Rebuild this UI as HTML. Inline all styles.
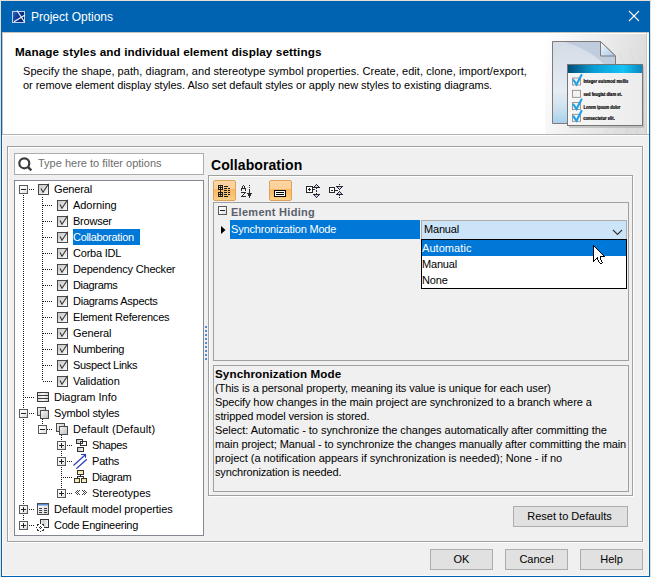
<!DOCTYPE html>
<html><head><meta charset="utf-8">
<style>
*{margin:0;padding:0;box-sizing:border-box}
html,body{width:651px;height:577px;overflow:hidden;background:#e6dfd8;font-family:"Liberation Sans",sans-serif;font-size:11px;color:#000}
.a{position:absolute}
.t{position:absolute;white-space:nowrap;line-height:14px}
.tr{letter-spacing:-0.18px}
.dv{position:absolute;width:1px;background:repeating-linear-gradient(to bottom,#1a1a1a 0 1px,transparent 1px 2px)}
.dh{position:absolute;height:1px;background:repeating-linear-gradient(to right,#1a1a1a 0 1px,transparent 1px 2px)}
.exp{position:absolute;width:9px;height:9px;border:1px solid #5a5a5a;background:linear-gradient(135deg,#fff 0%,#f4f4f4 50%,#dcdcdc 100%)}
.exp:before{content:"";position:absolute;left:1px;top:3px;width:5px;height:1px;background:#222}
.exp.p:after{content:"";position:absolute;left:3px;top:1px;width:1px;height:5px;background:#222}
.btn{position:absolute;border:1px solid #adadad;background:#e1e1e1;text-align:center;line-height:18px}
</style></head><body>

<div class="a" style="left:1px;top:1px;width:649px;height:576px;background:#0063b1"></div>
<div class="a" style="left:2px;top:32px;width:647px;height:544px;background:#fcf8f3"></div>
<div class="a" style="left:3px;top:32px;width:645px;height:543px;background:#f0f0f0"></div>
<div class="a" style="left:2px;top:32px;width:647px;height:102px;background:#fff;border-top:1px solid #c9c3bd;border-left:1px solid #c9c3bd"></div>
<div class="a" style="left:2px;top:134px;width:647px;height:1px;background:#b4b4b4"></div>
<div class="a" style="left:2px;top:135px;width:647px;height:1px;background:#fdfdfd"></div>
<div class="t" style="left:31px;top:9px;font-size:12px;color:#fff;line-height:16px">Project Options</div>
<svg class="a" style="left:11px;top:10px" width="15" height="14" viewBox="0 0 15 14">
<defs><linearGradient id="tig" x1="0" y1="0" x2="1" y2="0.4"><stop offset="0" stop-color="#2f6ad0"/><stop offset="0.5" stop-color="#0d3a9a"/><stop offset="1" stop-color="#06206e"/></linearGradient></defs>
<rect x="1.5" y="1.5" width="12" height="11" fill="url(#tig)" stroke="#c4d0e6" stroke-width="1"/>
<path d="M6 0.5 L13.8 12.5 M3 11.8 L14 5" stroke="#f0f4fb" stroke-width="1.2" fill="none"/>
</svg>
<svg class="a" style="left:628px;top:10px" width="12" height="12" viewBox="0 0 12 12">
<path d="M1 1 L11 11 M11 1 L1 11" stroke="#fff" stroke-width="1.1"/></svg>
<div class="t" style="left:15px;top:45px;font-weight:bold;letter-spacing:0.1px;transform:scaleX(1.063);transform-origin:0 0">Manage styles and individual element display settings</div>
<div class="t" style="left:23px;top:64px;letter-spacing:0.055px">Specify the shape, path, diagram, and stereotype symbol properties. Create, edit, clone, import/export,</div>
<div class="t" style="left:23px;top:78px;letter-spacing:-0.035px">or remove element display styles. Also set default styles or apply new styles to existing diagrams.</div>
<svg class="a" style="left:545px;top:33px" width="104" height="101" viewBox="0 0 104 101">
<defs>
<linearGradient id="hbg" x1="0" y1="0" x2="1" y2="0.25"><stop offset="0" stop-color="#ffffff"/><stop offset="0.45" stop-color="#f0f0f0"/><stop offset="1" stop-color="#dcdcdc"/></linearGradient>
<linearGradient id="doc" x1="0" y1="0" x2="0" y2="1"><stop offset="0" stop-color="#d3dbe6"/><stop offset="0.6" stop-color="#e6ecf3"/><stop offset="0.8" stop-color="#cfe2f0"/><stop offset="1" stop-color="#a6d0ec"/></linearGradient>
<linearGradient id="fold" x1="0" y1="0" x2="1" y2="1"><stop offset="0" stop-color="#f4f8fc"/><stop offset="1" stop-color="#a9c9ea"/></linearGradient>
<linearGradient id="tb" x1="0" y1="0" x2="1" y2="0"><stop offset="0" stop-color="#004e78"/><stop offset="0.35" stop-color="#0a9ed4"/><stop offset="0.75" stop-color="#16c2f4"/><stop offset="1" stop-color="#0a86bc"/></linearGradient>
<linearGradient id="pnl" x1="0" y1="0" x2="1" y2="0"><stop offset="0" stop-color="#f7f7f7"/><stop offset="1" stop-color="#ececec"/></linearGradient>
</defs>
<rect x="0" y="0" width="102" height="101" fill="url(#hbg)"/>
<g stroke="#cfd3d8" stroke-width="0.5" fill="none" opacity="0.8">
<path d="M60 101 Q80 70 102 55 M70 101 Q85 78 102 68 M80 101 Q90 85 102 80 M90 101 Q95 92 102 90"/>
<path d="M75 20 Q90 60 92 101 M85 15 Q98 55 100 101 M65 30 Q78 65 82 101"/>
</g>
<rect x="0" y="0" width="102" height="1" fill="#fff"/>
<rect x="101" y="0" width="1" height="101" fill="#cacaca"/>
<rect x="102" y="0" width="2" height="101" fill="#fff"/>
<path d="M7.5 8.5 H55.5 L70.5 23 V90.5 H7.5 Z" fill="url(#doc)" stroke="#807b78" stroke-width="1"/>
<path d="M20 9 Q55 20 70 45 V23 L55.5 9 Z" fill="#b8c7da" opacity="0.75"/>
<path d="M55.5 8.5 V23 H70.5 Z" fill="url(#fold)" stroke="#807b78" stroke-width="1"/>
<rect x="24" y="33" width="75" height="62" fill="#9a9a9a" opacity="0.45"/>
<rect x="22.5" y="31.5" width="75" height="61" fill="url(#pnl)" stroke="#767676" stroke-width="1"/>
<rect x="23" y="32" width="74" height="8" fill="url(#tb)"/>
<g fill="#f2f2f2" stroke="#8d7f7f" stroke-width="0.8">
<rect x="27.5" y="45" width="8" height="7"/><rect x="27.5" y="57.3" width="8" height="7"/><rect x="27.5" y="69.6" width="8" height="7"/><rect x="27.5" y="81.3" width="8" height="7"/></g>
<g stroke="#1aa2e8" stroke-width="2.1" fill="none" stroke-linecap="round">
<path d="M28.5 47 L31.5 51.5 L36.5 42"/><path d="M28.5 71.6 L31.5 76 L36.5 66.5"/><path d="M28.5 83.3 L31.5 87.8 L36.5 78"/></g>
<g fill="#000" stroke="#000" stroke-width="0.2" font-size="5" font-weight="bold" font-family="Liberation Sans">
<text x="38.4" y="50.3" textLength="45" lengthAdjust="spacingAndGlyphs">Integer euismod mollis</text>
<text x="38.4" y="63.2" textLength="38.7" lengthAdjust="spacingAndGlyphs">sed feugiat diam et.</text>
<text x="38.4" y="75.5" textLength="37" lengthAdjust="spacingAndGlyphs">Lorem ipsum dolor</text>
<text x="38.2" y="87.2" textLength="31.6" lengthAdjust="spacingAndGlyphs">consectetur elit.</text></g>
</svg>
<div class="a" style="left:7px;top:146px;width:636px;height:396px;border:1px solid #a0a0a0;border-right-color:#a0a0a0"></div>
<div class="a" style="left:8px;top:147px;width:634px;height:394px;border-left:1px solid #fff;border-top:1px solid #fff"></div>
<div class="a" style="left:7px;top:542px;width:637px;height:1px;background:#fff"></div>
<div class="a" style="left:643px;top:146px;width:1px;height:397px;background:#fff"></div>
<div class="a" style="left:14px;top:153px;width:190px;height:22px;border:1px solid #abadb3;background:#fff"></div>
<svg class="a" style="left:17px;top:156px" width="16" height="16" viewBox="0 0 16 16">
<circle cx="7.3" cy="7.3" r="5" fill="none" stroke="#3c3c3c" stroke-width="2.2"/>
<path d="M10.8 10.8 L14.3 14.3" stroke="#3c3c3c" stroke-width="2.4"/></svg>
<div class="t" style="left:38px;top:156px;color:#6d6d6d">Type here to filter options</div>
<div class="a" style="left:14px;top:180px;width:190px;height:356px;border:1px solid #828790;background:#fff"></div>
<div class="dv" style="left:23px;top:195px;height:326px"></div>
<div class="dv" style="left:42px;top:197px;height:184px"></div>
<div class="dv" style="left:42px;top:419px;height:6px"></div>
<div class="dv" style="left:61px;top:435px;height:55px"></div>
<div class="exp" style="left:19px;top:185px"></div>
<div class="dh" style="left:29px;top:189px;width:5px"></div>
<svg class="a" style="left:38px;top:183px" width="13" height="12" viewBox="0 0 13 12">
<defs><linearGradient id="cg189" x1="0" y1="0" x2="1" y2="1"><stop offset="0" stop-color="#c4c4c4"/><stop offset="1" stop-color="#fdfdfd"/></linearGradient></defs>
<rect x="0.5" y="1.5" width="10" height="10" fill="url(#cg189)" stroke="#474747" stroke-width="1"/>
<path d="M3 5.5 L5 9.2 L10.6 0.8" fill="none" stroke="#333" stroke-width="1.1"/></svg>
<div class="t" style="left:54px;top:182px;letter-spacing:-0.163px">General</div>
<div class="dh" style="left:43px;top:205px;width:9px"></div>
<svg class="a" style="left:57px;top:199px" width="13" height="12" viewBox="0 0 13 12">
<defs><linearGradient id="cg205" x1="0" y1="0" x2="1" y2="1"><stop offset="0" stop-color="#c4c4c4"/><stop offset="1" stop-color="#fdfdfd"/></linearGradient></defs>
<rect x="0.5" y="1.5" width="10" height="10" fill="url(#cg205)" stroke="#474747" stroke-width="1"/>
<path d="M3 5.5 L5 9.2 L10.6 0.8" fill="none" stroke="#333" stroke-width="1.1"/></svg>
<div class="t" style="left:73px;top:198px;letter-spacing:-0.051px">Adorning</div>
<div class="dh" style="left:43px;top:221px;width:9px"></div>
<svg class="a" style="left:57px;top:215px" width="13" height="12" viewBox="0 0 13 12">
<defs><linearGradient id="cg221" x1="0" y1="0" x2="1" y2="1"><stop offset="0" stop-color="#c4c4c4"/><stop offset="1" stop-color="#fdfdfd"/></linearGradient></defs>
<rect x="0.5" y="1.5" width="10" height="10" fill="url(#cg221)" stroke="#474747" stroke-width="1"/>
<path d="M3 5.5 L5 9.2 L10.6 0.8" fill="none" stroke="#333" stroke-width="1.1"/></svg>
<div class="t" style="left:73px;top:214px;letter-spacing:-0.23px">Browser</div>
<div class="dh" style="left:43px;top:237px;width:9px"></div>
<svg class="a" style="left:57px;top:231px" width="13" height="12" viewBox="0 0 13 12">
<defs><linearGradient id="cg237" x1="0" y1="0" x2="1" y2="1"><stop offset="0" stop-color="#c4c4c4"/><stop offset="1" stop-color="#fdfdfd"/></linearGradient></defs>
<rect x="0.5" y="1.5" width="10" height="10" fill="url(#cg237)" stroke="#474747" stroke-width="1"/>
<path d="M3 5.5 L5 9.2 L10.6 0.8" fill="none" stroke="#333" stroke-width="1.1"/></svg>
<div class="a" style="left:73px;top:229px;width:67px;height:16px;background:#0078d7"></div>
<div class="t" style="left:73px;top:230px;color:#fff;letter-spacing:-0.313px">Collaboration</div>
<div class="dh" style="left:43px;top:253px;width:9px"></div>
<svg class="a" style="left:57px;top:247px" width="13" height="12" viewBox="0 0 13 12">
<defs><linearGradient id="cg253" x1="0" y1="0" x2="1" y2="1"><stop offset="0" stop-color="#c4c4c4"/><stop offset="1" stop-color="#fdfdfd"/></linearGradient></defs>
<rect x="0.5" y="1.5" width="10" height="10" fill="url(#cg253)" stroke="#474747" stroke-width="1"/>
<path d="M3 5.5 L5 9.2 L10.6 0.8" fill="none" stroke="#333" stroke-width="1.1"/></svg>
<div class="t" style="left:73px;top:246px;letter-spacing:-0.211px">Corba IDL</div>
<div class="dh" style="left:43px;top:269px;width:9px"></div>
<svg class="a" style="left:57px;top:263px" width="13" height="12" viewBox="0 0 13 12">
<defs><linearGradient id="cg269" x1="0" y1="0" x2="1" y2="1"><stop offset="0" stop-color="#c4c4c4"/><stop offset="1" stop-color="#fdfdfd"/></linearGradient></defs>
<rect x="0.5" y="1.5" width="10" height="10" fill="url(#cg269)" stroke="#474747" stroke-width="1"/>
<path d="M3 5.5 L5 9.2 L10.6 0.8" fill="none" stroke="#333" stroke-width="1.1"/></svg>
<div class="t" style="left:73px;top:262px;letter-spacing:-0.192px">Dependency Checker</div>
<div class="dh" style="left:43px;top:285px;width:9px"></div>
<svg class="a" style="left:57px;top:279px" width="13" height="12" viewBox="0 0 13 12">
<defs><linearGradient id="cg285" x1="0" y1="0" x2="1" y2="1"><stop offset="0" stop-color="#c4c4c4"/><stop offset="1" stop-color="#fdfdfd"/></linearGradient></defs>
<rect x="0.5" y="1.5" width="10" height="10" fill="url(#cg285)" stroke="#474747" stroke-width="1"/>
<path d="M3 5.5 L5 9.2 L10.6 0.8" fill="none" stroke="#333" stroke-width="1.1"/></svg>
<div class="t" style="left:73px;top:278px;letter-spacing:-0.323px">Diagrams</div>
<div class="dh" style="left:43px;top:301px;width:9px"></div>
<svg class="a" style="left:57px;top:295px" width="13" height="12" viewBox="0 0 13 12">
<defs><linearGradient id="cg301" x1="0" y1="0" x2="1" y2="1"><stop offset="0" stop-color="#c4c4c4"/><stop offset="1" stop-color="#fdfdfd"/></linearGradient></defs>
<rect x="0.5" y="1.5" width="10" height="10" fill="url(#cg301)" stroke="#474747" stroke-width="1"/>
<path d="M3 5.5 L5 9.2 L10.6 0.8" fill="none" stroke="#333" stroke-width="1.1"/></svg>
<div class="t" style="left:73px;top:294px;letter-spacing:-0.253px">Diagrams Aspects</div>
<div class="dh" style="left:43px;top:317px;width:9px"></div>
<svg class="a" style="left:57px;top:311px" width="13" height="12" viewBox="0 0 13 12">
<defs><linearGradient id="cg317" x1="0" y1="0" x2="1" y2="1"><stop offset="0" stop-color="#c4c4c4"/><stop offset="1" stop-color="#fdfdfd"/></linearGradient></defs>
<rect x="0.5" y="1.5" width="10" height="10" fill="url(#cg317)" stroke="#474747" stroke-width="1"/>
<path d="M3 5.5 L5 9.2 L10.6 0.8" fill="none" stroke="#333" stroke-width="1.1"/></svg>
<div class="t" style="left:73px;top:310px;letter-spacing:-0.18px">Element References</div>
<div class="dh" style="left:43px;top:333px;width:9px"></div>
<svg class="a" style="left:57px;top:327px" width="13" height="12" viewBox="0 0 13 12">
<defs><linearGradient id="cg333" x1="0" y1="0" x2="1" y2="1"><stop offset="0" stop-color="#c4c4c4"/><stop offset="1" stop-color="#fdfdfd"/></linearGradient></defs>
<rect x="0.5" y="1.5" width="10" height="10" fill="url(#cg333)" stroke="#474747" stroke-width="1"/>
<path d="M3 5.5 L5 9.2 L10.6 0.8" fill="none" stroke="#333" stroke-width="1.1"/></svg>
<div class="t" style="left:73px;top:326px;letter-spacing:-0.13px">General</div>
<div class="dh" style="left:43px;top:349px;width:9px"></div>
<svg class="a" style="left:57px;top:343px" width="13" height="12" viewBox="0 0 13 12">
<defs><linearGradient id="cg349" x1="0" y1="0" x2="1" y2="1"><stop offset="0" stop-color="#c4c4c4"/><stop offset="1" stop-color="#fdfdfd"/></linearGradient></defs>
<rect x="0.5" y="1.5" width="10" height="10" fill="url(#cg349)" stroke="#474747" stroke-width="1"/>
<path d="M3 5.5 L5 9.2 L10.6 0.8" fill="none" stroke="#333" stroke-width="1.1"/></svg>
<div class="t" style="left:73px;top:342px;letter-spacing:-0.293px">Numbering</div>
<div class="dh" style="left:43px;top:365px;width:9px"></div>
<svg class="a" style="left:57px;top:359px" width="13" height="12" viewBox="0 0 13 12">
<defs><linearGradient id="cg365" x1="0" y1="0" x2="1" y2="1"><stop offset="0" stop-color="#c4c4c4"/><stop offset="1" stop-color="#fdfdfd"/></linearGradient></defs>
<rect x="0.5" y="1.5" width="10" height="10" fill="url(#cg365)" stroke="#474747" stroke-width="1"/>
<path d="M3 5.5 L5 9.2 L10.6 0.8" fill="none" stroke="#333" stroke-width="1.1"/></svg>
<div class="t" style="left:73px;top:358px;letter-spacing:-0.338px">Suspect Links</div>
<div class="dh" style="left:43px;top:381px;width:9px"></div>
<svg class="a" style="left:57px;top:375px" width="13" height="12" viewBox="0 0 13 12">
<defs><linearGradient id="cg381" x1="0" y1="0" x2="1" y2="1"><stop offset="0" stop-color="#c4c4c4"/><stop offset="1" stop-color="#fdfdfd"/></linearGradient></defs>
<rect x="0.5" y="1.5" width="10" height="10" fill="url(#cg381)" stroke="#474747" stroke-width="1"/>
<path d="M3 5.5 L5 9.2 L10.6 0.8" fill="none" stroke="#333" stroke-width="1.1"/></svg>
<div class="t" style="left:73px;top:374px;letter-spacing:-0.08px">Validation</div>
<div class="dh" style="left:25px;top:397px;width:9px"></div>
<svg class="a" style="left:37px;top:392px" width="12" height="10" viewBox="0 0 12 10">
<defs><linearGradient id="ig" x1="0" y1="0" x2="1" y2="0"><stop offset="0" stop-color="#d8d8d8"/><stop offset="0.5" stop-color="#fafafa"/><stop offset="1" stop-color="#d0d0d0"/></linearGradient></defs>
<rect x="0.5" y="0.5" width="11" height="9" fill="url(#ig)" stroke="#3c3c3c"/>
<path d="M0.5 3.5 H11.5 M0.5 6.5 H11.5" stroke="#3c3c3c"/></svg>
<div class="t" style="left:54px;top:390px;letter-spacing:-0.016px">Diagram Info</div>
<div class="exp" style="left:19px;top:409px"></div>
<div class="dh" style="left:29px;top:413px;width:5px"></div>
<svg class="a" style="left:37px;top:407px" width="13" height="13" viewBox="0 0 13 13">
<defs><linearGradient id="sg413" x1="0" y1="0" x2="1" y2="1"><stop offset="0" stop-color="#f8f8f8"/><stop offset="1" stop-color="#bdbdbd"/></linearGradient></defs>
<rect x="0.5" y="0.5" width="8" height="8" fill="url(#sg413)" stroke="#4a4a4a"/>
<rect x="3.5" y="3.5" width="8" height="8" fill="url(#sg413)" stroke="#4a4a4a"/></svg>
<div class="t" style="left:54px;top:406px;letter-spacing:-0.188px">Symbol styles</div>
<div class="exp" style="left:38px;top:425px"></div>
<div class="dh" style="left:47px;top:429px;width:5px"></div>
<svg class="a" style="left:56px;top:423px" width="13" height="13" viewBox="0 0 13 13">
<defs><linearGradient id="sg429" x1="0" y1="0" x2="1" y2="1"><stop offset="0" stop-color="#f8f8f8"/><stop offset="1" stop-color="#bdbdbd"/></linearGradient></defs>
<rect x="0.5" y="0.5" width="8" height="8" fill="url(#sg429)" stroke="#4a4a4a"/>
<rect x="3.5" y="3.5" width="8" height="8" fill="url(#sg429)" stroke="#4a4a4a"/></svg>
<div class="t" style="left:73px;top:422px;letter-spacing:0.132px">Default (Default)</div>
<div class="exp p" style="left:57px;top:441px"></div>
<div class="dh" style="left:67px;top:445px;width:5px"></div>
<svg class="a" style="left:76px;top:439px" width="12" height="13" viewBox="0 0 12 13">
<defs><linearGradient id="shg" x1="0" y1="0" x2="1" y2="0"><stop offset="0" stop-color="#bdbdbd"/><stop offset="1" stop-color="#fff"/></linearGradient></defs>
<g fill="url(#shg)" stroke="#333" shape-rendering="crispEdges">
<rect x="0.5" y="0.5" width="6" height="4"/><rect x="4.5" y="2.5" width="6" height="4" fill="none"/><rect x="1.5" y="8.5" width="6" height="4"/></g></svg>
<div class="t" style="left:92px;top:438px;letter-spacing:-0.34px">Shapes</div>
<div class="exp p" style="left:57px;top:457px"></div>
<div class="dh" style="left:67px;top:461px;width:5px"></div>
<svg class="a" style="left:73px;top:453px" width="14" height="16" viewBox="0 0 14 16">
<path d="M0.5 12.5 L12.3 1.7 M8 1.5 H12.5 V4.8 M3.3 15.7 L13.8 6.3" stroke="#2a3cc0" stroke-width="1.2" fill="none"/></svg>
<div class="t" style="left:92px;top:454px;letter-spacing:-0.205px">Paths</div>
<div class="dh" style="left:63px;top:477px;width:9px"></div>
<svg class="a" style="left:74px;top:470px" width="13" height="13" viewBox="0 0 13 13" shape-rendering="crispEdges">
<defs><linearGradient id="dgy" x1="0" y1="0" x2="0" y2="1"><stop offset="0" stop-color="#e9de7a"/><stop offset="1" stop-color="#fffbe0"/></linearGradient></defs>
<path d="M6.5 5 V7 M3 6.5 H10 M3.5 6 V8 M9.5 6 V8" stroke="#333" fill="none"/>
<g fill="url(#dgy)" stroke="#333"><rect x="3.5" y="0.5" width="6" height="4"/><rect x="0.5" y="8.5" width="5" height="4"/><rect x="7.5" y="8.5" width="5" height="4"/></g></svg>
<div class="t" style="left:92px;top:470px;letter-spacing:-0.33px">Diagram</div>
<div class="exp p" style="left:57px;top:489px"></div>
<div class="dh" style="left:67px;top:493px;width:5px"></div>
<svg class="a" style="left:75px;top:490px" width="12" height="5" viewBox="0 0 12 5" shape-rendering="crispEdges"><g fill="#444"><rect x="2" y="0" width="1" height="1"/><rect x="4" y="0" width="1" height="1"/><rect x="1" y="1" width="1" height="1"/><rect x="3" y="1" width="1" height="1"/><rect x="0" y="2" width="1" height="1"/><rect x="2" y="2" width="1" height="1"/><rect x="1" y="3" width="1" height="1"/><rect x="3" y="3" width="1" height="1"/><rect x="2" y="4" width="1" height="1"/><rect x="4" y="4" width="1" height="1"/><rect x="7" y="0" width="1" height="1"/><rect x="9" y="0" width="1" height="1"/><rect x="8" y="1" width="1" height="1"/><rect x="10" y="1" width="1" height="1"/><rect x="9" y="2" width="1" height="1"/><rect x="11" y="2" width="1" height="1"/><rect x="8" y="3" width="1" height="1"/><rect x="10" y="3" width="1" height="1"/><rect x="7" y="4" width="1" height="1"/><rect x="9" y="4" width="1" height="1"/></g></svg>
<div class="t" style="left:92px;top:486px;letter-spacing:0.01px">Stereotypes</div>
<div class="exp p" style="left:19px;top:505px"></div>
<div class="dh" style="left:29px;top:509px;width:5px"></div>
<svg class="a" style="left:37px;top:503px" width="12" height="12" viewBox="0 0 12 12">
<defs><linearGradient id="pg" x1="0" y1="0" x2="1" y2="1"><stop offset="0" stop-color="#fff"/><stop offset="1" stop-color="#d4d4d4"/></linearGradient></defs>
<rect x="0.5" y="0.5" width="11" height="11" fill="url(#pg)" stroke="#4a4a4a"/>
<rect x="1" y="1" width="10" height="1.5" fill="#5b8fd6"/>
<path d="M2 5.5 H5 M7 5.5 H10 M2 7.5 H5 M7 7.5 H10 M2 9.5 H5 M7 9.5 H10" stroke="#3a3a3a"/></svg>
<div class="t" style="left:54px;top:502px;letter-spacing:-0.045px">Default model properties</div>
<div class="exp p" style="left:19px;top:521px"></div>
<div class="dh" style="left:29px;top:525px;width:5px"></div>
<svg class="a" style="left:35px;top:518px" width="15" height="15" viewBox="0 0 15 15" shape-rendering="crispEdges">
<defs><linearGradient id="cdg" x1="0" y1="0" x2="1" y2="0"><stop offset="0" stop-color="#f4f4f4"/><stop offset="0.4" stop-color="#cfcfcf"/><stop offset="1" stop-color="#fff"/></linearGradient></defs>
<rect x="5.5" y="1.5" width="8" height="8" fill="url(#cdg)" stroke="#333"/>
<rect x="2" y="6" width="7" height="7" fill="#fff"/>
<g fill="#333"><rect x="2" y="6" width="1" height="1"/><rect x="3" y="6" width="1" height="1"/><rect x="2" y="7" width="1" height="1"/><rect x="7" y="6" width="1" height="1"/><rect x="8" y="6" width="1" height="1"/><rect x="8" y="7" width="1" height="1"/><rect x="2" y="11" width="1" height="1"/><rect x="2" y="12" width="1" height="1"/><rect x="3" y="12" width="1" height="1"/><rect x="8" y="11" width="1" height="1"/><rect x="8" y="12" width="1" height="1"/><rect x="7" y="12" width="1" height="1"/><rect x="5" y="8" width="1" height="1"/><rect x="4" y="9" width="1" height="1"/><rect x="6" y="9" width="1" height="1"/><rect x="5" y="10" width="1" height="1"/><rect x="1" y="9" width="1" height="1"/><rect x="5" y="13" width="1" height="1"/></g></svg>
<div class="t" style="left:54px;top:518px;letter-spacing:-0.247px">Code Engineering</div>
<div class="a" style="left:205px;top:326px;width:2px;height:34px;background:repeating-linear-gradient(to bottom,#4f8ad6 0 2px,transparent 2px 4px)"></div>
<div class="t" style="left:211px;top:156px;font-size:14px;font-weight:bold;line-height:18px;letter-spacing:0.08px">Collaboration</div>
<div class="a" style="left:209px;top:176px;width:425px;height:321px;border:1px solid #fff"></div>
<div class="a" style="left:208px;top:175px;width:425px;height:321px;border:1px solid #a0a0a0"></div>
<div class="a" style="left:213px;top:180px;width:23px;height:21px;border:1px solid #dca45a;border-radius:2px;background:linear-gradient(#fdd6a4,#fdcf98 40%,#f9b860 42%,#fbc473 80%,#fcd28a)"></div>
<div class="a" style="left:269px;top:180px;width:23px;height:21px;border:1px solid #dca45a;border-radius:2px;background:linear-gradient(#fdd6a4,#fdcf98 40%,#f9b860 42%,#fbc473 80%,#fcd28a)"></div>
<svg class="a" style="left:214px;top:181px" width="20" height="19" shape-rendering="crispEdges"><g fill="#1e1e1e"><rect x="4" y="4" width="1" height="1"/><rect x="5" y="4" width="1" height="1"/><rect x="6" y="4" width="1" height="1"/><rect x="7" y="4" width="1" height="1"/><rect x="8" y="4" width="1" height="1"/><rect x="4" y="5" width="1" height="1"/><rect x="6" y="5" width="1" height="1"/><rect x="8" y="5" width="1" height="1"/><rect x="4" y="6" width="1" height="1"/><rect x="5" y="6" width="1" height="1"/><rect x="6" y="6" width="1" height="1"/><rect x="7" y="6" width="1" height="1"/><rect x="8" y="6" width="1" height="1"/><rect x="4" y="7" width="1" height="1"/><rect x="6" y="7" width="1" height="1"/><rect x="8" y="7" width="1" height="1"/><rect x="4" y="8" width="1" height="1"/><rect x="5" y="8" width="1" height="1"/><rect x="6" y="8" width="1" height="1"/><rect x="7" y="8" width="1" height="1"/><rect x="8" y="8" width="1" height="1"/><rect x="4" y="11" width="1" height="1"/><rect x="5" y="11" width="1" height="1"/><rect x="6" y="11" width="1" height="1"/><rect x="7" y="11" width="1" height="1"/><rect x="8" y="11" width="1" height="1"/><rect x="4" y="12" width="1" height="1"/><rect x="6" y="12" width="1" height="1"/><rect x="8" y="12" width="1" height="1"/><rect x="4" y="13" width="1" height="1"/><rect x="5" y="13" width="1" height="1"/><rect x="6" y="13" width="1" height="1"/><rect x="7" y="13" width="1" height="1"/><rect x="8" y="13" width="1" height="1"/><rect x="4" y="14" width="1" height="1"/><rect x="6" y="14" width="1" height="1"/><rect x="8" y="14" width="1" height="1"/><rect x="4" y="15" width="1" height="1"/><rect x="5" y="15" width="1" height="1"/><rect x="6" y="15" width="1" height="1"/><rect x="7" y="15" width="1" height="1"/><rect x="8" y="15" width="1" height="1"/><rect x="6" y="9" width="1" height="1"/><rect x="6" y="10" width="1" height="1"/><rect x="10" y="5" width="1" height="1"/><rect x="11" y="5" width="1" height="1"/><rect x="12" y="5" width="1" height="1"/><rect x="13" y="5" width="1" height="1"/><rect x="10" y="15" width="1" height="1"/><rect x="11" y="15" width="1" height="1"/><rect x="12" y="15" width="1" height="1"/><rect x="13" y="15" width="1" height="1"/><rect x="10" y="7" width="1" height="1"/><rect x="11" y="7" width="1" height="1"/><rect x="12" y="7" width="1" height="1"/><rect x="14" y="7" width="1" height="1"/><rect x="15" y="7" width="1" height="1"/><rect x="10" y="9" width="1" height="1"/><rect x="11" y="9" width="1" height="1"/><rect x="12" y="9" width="1" height="1"/><rect x="14" y="9" width="1" height="1"/><rect x="15" y="9" width="1" height="1"/><rect x="10" y="11" width="1" height="1"/><rect x="11" y="11" width="1" height="1"/><rect x="12" y="11" width="1" height="1"/><rect x="14" y="11" width="1" height="1"/><rect x="15" y="11" width="1" height="1"/><rect x="10" y="13" width="1" height="1"/><rect x="11" y="13" width="1" height="1"/><rect x="12" y="13" width="1" height="1"/><rect x="14" y="13" width="1" height="1"/><rect x="15" y="13" width="1" height="1"/></g></svg>
<svg class="a" style="left:237px;top:181px" width="20" height="19" shape-rendering="crispEdges"><g fill="#2a2a2a"><rect x="6" y="4" width="1" height="1"/><rect x="5" y="5" width="1" height="1"/><rect x="7" y="5" width="1" height="1"/><rect x="5" y="6" width="1" height="1"/><rect x="7" y="6" width="1" height="1"/><rect x="4" y="7" width="1" height="1"/><rect x="5" y="7" width="1" height="1"/><rect x="6" y="7" width="1" height="1"/><rect x="7" y="7" width="1" height="1"/><rect x="8" y="7" width="1" height="1"/><rect x="4" y="8" width="1" height="1"/><rect x="8" y="8" width="1" height="1"/><rect x="4" y="9" width="1" height="1"/><rect x="8" y="9" width="1" height="1"/><rect x="4" y="11" width="1" height="1"/><rect x="5" y="11" width="1" height="1"/><rect x="6" y="11" width="1" height="1"/><rect x="7" y="11" width="1" height="1"/><rect x="8" y="11" width="1" height="1"/><rect x="7" y="12" width="1" height="1"/><rect x="6" y="13" width="1" height="1"/><rect x="5" y="14" width="1" height="1"/><rect x="4" y="15" width="1" height="1"/><rect x="5" y="15" width="1" height="1"/><rect x="6" y="15" width="1" height="1"/><rect x="7" y="15" width="1" height="1"/><rect x="8" y="15" width="1" height="1"/><rect x="12" y="4" width="1" height="1"/><rect x="12" y="6" width="1" height="1"/><rect x="12" y="8" width="1" height="1"/><rect x="12" y="9" width="1" height="1"/><rect x="12" y="10" width="1" height="1"/><rect x="12" y="11" width="1" height="1"/><rect x="12" y="12" width="1" height="1"/><rect x="12" y="13" width="1" height="1"/><rect x="12" y="14" width="1" height="1"/><rect x="12" y="15" width="1" height="1"/><rect x="12" y="16" width="1" height="1"/><rect x="10" y="12" width="1" height="1"/><rect x="11" y="12" width="1" height="1"/><rect x="12" y="12" width="1" height="1"/><rect x="13" y="12" width="1" height="1"/><rect x="14" y="12" width="1" height="1"/><rect x="11" y="13" width="1" height="1"/><rect x="12" y="13" width="1" height="1"/><rect x="13" y="13" width="1" height="1"/><rect x="11" y="14" width="1" height="1"/><rect x="12" y="14" width="1" height="1"/><rect x="13" y="14" width="1" height="1"/></g></svg>
<svg class="a" style="left:274px;top:190px" width="12" height="7" shape-rendering="crispEdges"><rect x="0" y="0" width="12" height="7" fill="#000"/><rect x="1" y="1" width="10" height="5" fill="#fff"/><rect x="2" y="2" width="8" height="1" fill="#000"/><rect x="2" y="4" width="8" height="1" fill="#000"/></svg>
<svg class="a" style="left:300px;top:180px" width="50" height="22" shape-rendering="crispEdges"><rect x="7" y="7" width="5" height="5" fill="#fff"/><rect x="30" y="8" width="4" height="4" fill="#fff"/><g fill="#c9cdf2"><rect x="16" y="5" width="1" height="1"/><rect x="15" y="6" width="1" height="1"/><rect x="16" y="6" width="1" height="1"/><rect x="17" y="6" width="1" height="1"/><rect x="16" y="16" width="1" height="1"/><rect x="15" y="15" width="1" height="1"/><rect x="16" y="15" width="1" height="1"/><rect x="17" y="15" width="1" height="1"/><rect x="39" y="8" width="1" height="1"/><rect x="38" y="7" width="1" height="1"/><rect x="39" y="7" width="1" height="1"/><rect x="40" y="7" width="1" height="1"/><rect x="39" y="12" width="1" height="1"/><rect x="38" y="13" width="1" height="1"/><rect x="39" y="13" width="1" height="1"/><rect x="40" y="13" width="1" height="1"/></g><g fill="#262626"><rect x="6" y="6" width="1" height="1"/><rect x="7" y="6" width="1" height="1"/><rect x="8" y="6" width="1" height="1"/><rect x="9" y="6" width="1" height="1"/><rect x="10" y="6" width="1" height="1"/><rect x="11" y="6" width="1" height="1"/><rect x="12" y="6" width="1" height="1"/><rect x="6" y="12" width="1" height="1"/><rect x="7" y="12" width="1" height="1"/><rect x="8" y="12" width="1" height="1"/><rect x="9" y="12" width="1" height="1"/><rect x="10" y="12" width="1" height="1"/><rect x="11" y="12" width="1" height="1"/><rect x="12" y="12" width="1" height="1"/><rect x="6" y="6" width="1" height="1"/><rect x="6" y="7" width="1" height="1"/><rect x="6" y="8" width="1" height="1"/><rect x="6" y="9" width="1" height="1"/><rect x="6" y="10" width="1" height="1"/><rect x="6" y="11" width="1" height="1"/><rect x="6" y="12" width="1" height="1"/><rect x="12" y="6" width="1" height="1"/><rect x="12" y="7" width="1" height="1"/><rect x="12" y="8" width="1" height="1"/><rect x="12" y="9" width="1" height="1"/><rect x="12" y="10" width="1" height="1"/><rect x="12" y="11" width="1" height="1"/><rect x="12" y="12" width="1" height="1"/><rect x="8" y="9" width="1" height="1"/><rect x="9" y="9" width="1" height="1"/><rect x="10" y="9" width="1" height="1"/><rect x="9" y="8" width="1" height="1"/><rect x="9" y="10" width="1" height="1"/><rect x="13" y="9" width="1" height="1"/><rect x="14" y="9" width="1" height="1"/><rect x="16" y="4" width="1" height="1"/><rect x="15" y="5" width="1" height="1"/><rect x="17" y="5" width="1" height="1"/><rect x="14" y="6" width="1" height="1"/><rect x="18" y="6" width="1" height="1"/><rect x="13" y="7" width="1" height="1"/><rect x="14" y="7" width="1" height="1"/><rect x="15" y="7" width="1" height="1"/><rect x="16" y="7" width="1" height="1"/><rect x="17" y="7" width="1" height="1"/><rect x="18" y="7" width="1" height="1"/><rect x="19" y="7" width="1" height="1"/><rect x="16" y="17" width="1" height="1"/><rect x="15" y="16" width="1" height="1"/><rect x="17" y="16" width="1" height="1"/><rect x="14" y="15" width="1" height="1"/><rect x="18" y="15" width="1" height="1"/><rect x="13" y="14" width="1" height="1"/><rect x="14" y="14" width="1" height="1"/><rect x="15" y="14" width="1" height="1"/><rect x="16" y="14" width="1" height="1"/><rect x="17" y="14" width="1" height="1"/><rect x="18" y="14" width="1" height="1"/><rect x="19" y="14" width="1" height="1"/><rect x="16" y="8" width="1" height="1"/><rect x="16" y="10" width="1" height="1"/><rect x="16" y="11" width="1" height="1"/><rect x="16" y="13" width="1" height="1"/><rect x="29" y="7" width="1" height="1"/><rect x="30" y="7" width="1" height="1"/><rect x="31" y="7" width="1" height="1"/><rect x="32" y="7" width="1" height="1"/><rect x="33" y="7" width="1" height="1"/><rect x="34" y="7" width="1" height="1"/><rect x="29" y="12" width="1" height="1"/><rect x="30" y="12" width="1" height="1"/><rect x="31" y="12" width="1" height="1"/><rect x="32" y="12" width="1" height="1"/><rect x="33" y="12" width="1" height="1"/><rect x="34" y="12" width="1" height="1"/><rect x="29" y="7" width="1" height="1"/><rect x="29" y="8" width="1" height="1"/><rect x="29" y="9" width="1" height="1"/><rect x="29" y="10" width="1" height="1"/><rect x="29" y="11" width="1" height="1"/><rect x="29" y="12" width="1" height="1"/><rect x="34" y="7" width="1" height="1"/><rect x="34" y="8" width="1" height="1"/><rect x="34" y="9" width="1" height="1"/><rect x="34" y="10" width="1" height="1"/><rect x="34" y="11" width="1" height="1"/><rect x="34" y="12" width="1" height="1"/><rect x="31" y="10" width="1" height="1"/><rect x="32" y="10" width="1" height="1"/><rect x="35" y="10" width="1" height="1"/><rect x="36" y="10" width="1" height="1"/><rect x="37" y="10" width="1" height="1"/><rect x="39" y="4" width="1" height="1"/><rect x="39" y="15" width="1" height="1"/><rect x="39" y="17" width="1" height="1"/><rect x="39" y="9" width="1" height="1"/><rect x="38" y="8" width="1" height="1"/><rect x="40" y="8" width="1" height="1"/><rect x="37" y="7" width="1" height="1"/><rect x="41" y="7" width="1" height="1"/><rect x="36" y="6" width="1" height="1"/><rect x="37" y="6" width="1" height="1"/><rect x="38" y="6" width="1" height="1"/><rect x="39" y="6" width="1" height="1"/><rect x="40" y="6" width="1" height="1"/><rect x="41" y="6" width="1" height="1"/><rect x="42" y="6" width="1" height="1"/><rect x="39" y="11" width="1" height="1"/><rect x="38" y="12" width="1" height="1"/><rect x="40" y="12" width="1" height="1"/><rect x="37" y="13" width="1" height="1"/><rect x="41" y="13" width="1" height="1"/><rect x="36" y="14" width="1" height="1"/><rect x="37" y="14" width="1" height="1"/><rect x="38" y="14" width="1" height="1"/><rect x="39" y="14" width="1" height="1"/><rect x="40" y="14" width="1" height="1"/><rect x="41" y="14" width="1" height="1"/><rect x="42" y="14" width="1" height="1"/></g></svg>
<div class="a" style="left:213px;top:202px;width:416px;height:159px;border:1px solid #a0a0a0"></div>
<div class="exp" style="left:218px;top:206px"></div>
<div class="t" style="left:231px;top:205px;font-weight:bold;color:#5a606c;letter-spacing:0.28px">Element Hiding</div>
<svg class="a" style="left:221px;top:226px" width="5" height="8" viewBox="0 0 5 8"><path d="M0 0 L4.5 4 L0 8 Z" fill="#000"/></svg>
<div class="a" style="left:230px;top:220px;width:190px;height:19px;background:#0078d7"></div>
<div class="t tr" style="left:231px;top:222px;color:#fff">Synchronization Mode</div>
<div class="a" style="left:421px;top:220px;width:206px;height:19px;background:#cce4f7;border:1px solid #adadad;border-bottom:none"></div>
<div class="t tr" style="left:424px;top:222px">Manual</div>
<svg class="a" style="left:612px;top:229px" width="11" height="7" viewBox="0 0 11 7"><path d="M1 1 L5.5 5.5 L10 1" stroke="#333" stroke-width="1.1" fill="none"/></svg>
<div class="a" style="left:421px;top:239px;width:206px;height:50px;border:1px solid #000;background:#fff"></div>
<div class="a" style="left:422px;top:240px;width:204px;height:16px;background:#0078d7"></div>
<div class="t" style="left:422px;top:241px;color:#fff;letter-spacing:0.06px">Automatic</div>
<div class="t tr" style="left:422px;top:257px">Manual</div>
<div class="t tr" style="left:422px;top:273px">None</div>
<svg class="a" style="left:593px;top:245px" width="12" height="19" shape-rendering="crispEdges"><g fill="#fff"><rect x="1" y="2" width="1" height="1"/><rect x="1" y="3" width="1" height="1"/><rect x="2" y="3" width="1" height="1"/><rect x="1" y="4" width="1" height="1"/><rect x="2" y="4" width="1" height="1"/><rect x="3" y="4" width="1" height="1"/><rect x="1" y="5" width="1" height="1"/><rect x="2" y="5" width="1" height="1"/><rect x="3" y="5" width="1" height="1"/><rect x="4" y="5" width="1" height="1"/><rect x="1" y="6" width="1" height="1"/><rect x="2" y="6" width="1" height="1"/><rect x="3" y="6" width="1" height="1"/><rect x="4" y="6" width="1" height="1"/><rect x="5" y="6" width="1" height="1"/><rect x="1" y="7" width="1" height="1"/><rect x="2" y="7" width="1" height="1"/><rect x="3" y="7" width="1" height="1"/><rect x="4" y="7" width="1" height="1"/><rect x="5" y="7" width="1" height="1"/><rect x="6" y="7" width="1" height="1"/><rect x="1" y="8" width="1" height="1"/><rect x="2" y="8" width="1" height="1"/><rect x="3" y="8" width="1" height="1"/><rect x="4" y="8" width="1" height="1"/><rect x="5" y="8" width="1" height="1"/><rect x="6" y="8" width="1" height="1"/><rect x="7" y="8" width="1" height="1"/><rect x="1" y="9" width="1" height="1"/><rect x="2" y="9" width="1" height="1"/><rect x="3" y="9" width="1" height="1"/><rect x="4" y="9" width="1" height="1"/><rect x="5" y="9" width="1" height="1"/><rect x="6" y="9" width="1" height="1"/><rect x="7" y="9" width="1" height="1"/><rect x="8" y="9" width="1" height="1"/><rect x="1" y="10" width="1" height="1"/><rect x="2" y="10" width="1" height="1"/><rect x="3" y="10" width="1" height="1"/><rect x="4" y="10" width="1" height="1"/><rect x="5" y="10" width="1" height="1"/><rect x="6" y="10" width="1" height="1"/><rect x="7" y="10" width="1" height="1"/><rect x="8" y="10" width="1" height="1"/><rect x="9" y="10" width="1" height="1"/><rect x="1" y="11" width="1" height="1"/><rect x="2" y="11" width="1" height="1"/><rect x="3" y="11" width="1" height="1"/><rect x="4" y="11" width="1" height="1"/><rect x="5" y="11" width="1" height="1"/><rect x="6" y="11" width="1" height="1"/><rect x="1" y="12" width="1" height="1"/><rect x="2" y="12" width="1" height="1"/><rect x="3" y="12" width="1" height="1"/><rect x="5" y="12" width="1" height="1"/><rect x="6" y="12" width="1" height="1"/><rect x="1" y="13" width="1" height="1"/><rect x="2" y="13" width="1" height="1"/><rect x="5" y="13" width="1" height="1"/><rect x="6" y="13" width="1" height="1"/><rect x="1" y="14" width="1" height="1"/><rect x="5" y="14" width="1" height="1"/><rect x="6" y="14" width="1" height="1"/><rect x="6" y="15" width="1" height="1"/><rect x="7" y="15" width="1" height="1"/><rect x="6" y="16" width="1" height="1"/><rect x="7" y="16" width="1" height="1"/><rect x="7" y="17" width="1" height="1"/><rect x="8" y="17" width="1" height="1"/></g><g fill="#000"><rect x="0" y="0" width="1" height="1"/><rect x="0" y="1" width="1" height="1"/><rect x="1" y="1" width="1" height="1"/><rect x="0" y="2" width="1" height="1"/><rect x="2" y="2" width="1" height="1"/><rect x="0" y="3" width="1" height="1"/><rect x="3" y="3" width="1" height="1"/><rect x="0" y="4" width="1" height="1"/><rect x="4" y="4" width="1" height="1"/><rect x="0" y="5" width="1" height="1"/><rect x="5" y="5" width="1" height="1"/><rect x="0" y="6" width="1" height="1"/><rect x="6" y="6" width="1" height="1"/><rect x="0" y="7" width="1" height="1"/><rect x="7" y="7" width="1" height="1"/><rect x="0" y="8" width="1" height="1"/><rect x="8" y="8" width="1" height="1"/><rect x="0" y="9" width="1" height="1"/><rect x="9" y="9" width="1" height="1"/><rect x="0" y="10" width="1" height="1"/><rect x="10" y="10" width="1" height="1"/><rect x="0" y="11" width="1" height="1"/><rect x="7" y="11" width="1" height="1"/><rect x="8" y="11" width="1" height="1"/><rect x="9" y="11" width="1" height="1"/><rect x="10" y="11" width="1" height="1"/><rect x="11" y="11" width="1" height="1"/><rect x="0" y="12" width="1" height="1"/><rect x="4" y="12" width="1" height="1"/><rect x="7" y="12" width="1" height="1"/><rect x="0" y="13" width="1" height="1"/><rect x="3" y="13" width="1" height="1"/><rect x="4" y="13" width="1" height="1"/><rect x="7" y="13" width="1" height="1"/><rect x="0" y="14" width="1" height="1"/><rect x="2" y="14" width="1" height="1"/><rect x="4" y="14" width="1" height="1"/><rect x="7" y="14" width="1" height="1"/><rect x="0" y="15" width="1" height="1"/><rect x="1" y="15" width="1" height="1"/><rect x="5" y="15" width="1" height="1"/><rect x="8" y="15" width="1" height="1"/><rect x="0" y="16" width="1" height="1"/><rect x="5" y="16" width="1" height="1"/><rect x="8" y="16" width="1" height="1"/><rect x="6" y="17" width="1" height="1"/><rect x="9" y="17" width="1" height="1"/><rect x="7" y="18" width="1" height="1"/><rect x="8" y="18" width="1" height="1"/></g></svg>
<div class="a" style="left:213px;top:365px;width:416px;height:127px;border:1px solid #a0a0a0"></div>
<div class="t" style="left:215px;top:367px;font-weight:bold;letter-spacing:0.1px;transform:scaleX(1.058);transform-origin:0 0">Synchronization Mode</div>
<div class="t" style="left:215px;top:381px;letter-spacing:-0.087px">(This is a personal property, meaning its value is unique for each user)</div>
<div class="t" style="left:215px;top:395px;letter-spacing:-0.096px">Specify how changes in the main project are synchronized to a branch where a</div>
<div class="t" style="left:215px;top:409px;letter-spacing:-0.119px">stripped model version is stored.</div>
<div class="t" style="left:215px;top:423px;letter-spacing:-0.046px">Select: Automatic - to synchronize the changes automatically after committing the</div>
<div class="t" style="left:215px;top:437px;letter-spacing:-0.099px">main project; Manual - to synchronize the changes manually after committing the main</div>
<div class="t" style="left:215px;top:451px;letter-spacing:-0.035px">project (a notification appears if synchronization is needed); None - if no</div>
<div class="t" style="left:215px;top:465px;letter-spacing:-0.152px">synchronization is needed.</div>
<div class="btn" style="left:513px;top:506px;width:115px;height:21px;padding-right:2px">Reset to Defaults</div>
<div class="btn" style="left:430px;top:549px;width:63px;height:21px">OK</div>
<div class="btn" style="left:505px;top:549px;width:63px;height:21px">Cancel</div>
<div class="btn" style="left:580px;top:549px;width:63px;height:21px">Help</div>
</body></html>
